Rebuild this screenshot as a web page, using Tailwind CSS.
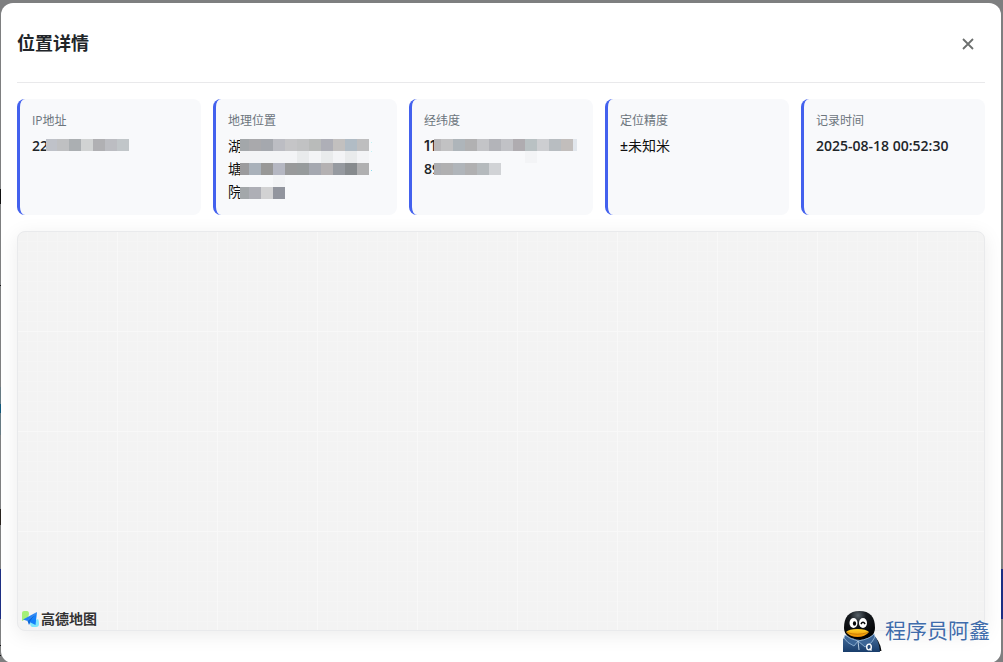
<!DOCTYPE html>
<html lang="zh-CN">
<head>
<meta charset="utf-8">
<meta name="viewport" content="width=device-width, initial-scale=1">
<title>位置详情</title>
<script src="https://cdn.jsdelivr.net/npm/@tailwindcss/browser@4"></script>
</head>
<body class="relative h-screen overflow-hidden bg-[#7e7f80] pt-[3px] pr-[2px] pl-px font-['Open_Sans','Noto_Sans_CJK_SC',sans-serif] text-[#212529]">

<!-- Edges of the dimmed page behind the dialog -->
<svg class="absolute top-0 left-0 h-[662px] w-px" viewBox="0 0 1 662" preserveAspectRatio="none" shape-rendering="crispEdges" aria-hidden="true">
  <path fill="#111" d="M0 189h1v15H0zM0 285h1v1H0zM0 645h1v1H0zM0 655h1v1H0z"/>
  <path fill="#667a83" d="M0 387h1v48H0z"/>
  <path fill="#10587c" d="M0 404h1v9H0z"/>
  <path fill="#29231e" d="M0 509h1v16H0z"/>
  <path fill="#1d2e83" d="M0 569h1v50H0z"/>
</svg>
<div class="absolute top-[569px] right-0 h-[50px] w-[2px] bg-[#1d2e83]"></div>

<main role="dialog" aria-labelledby="title" class="relative rounded-xl bg-white px-4 pt-4 pb-8">
  <header class="mb-4 flex items-center justify-between border-b border-[#e9e9eb] pb-[15px]">
    <h1 id="title" class="text-lg leading-[48px] font-bold">位置详情</h1>
    <button type="button" aria-label="关闭" class="flex size-[34px] items-center justify-center text-[#6c6f6e]">
      <svg class="mt-[2px] size-3" viewBox="0 0 12 12" fill="none" stroke="currentColor" stroke-width="1.8"><path d="M1 1l10 10M11 1L1 11"/></svg>
    </button>
  </header>

  <section class="mb-4 grid grid-cols-5 gap-3">
    <div class="relative min-h-[116px] rounded-lg border-l-3 border-[#4361ee] bg-[#f8f9fb] p-3">
      <div class="mb-1 text-xs leading-[19px] text-[#6c757d]">IP地址</div>
      <div class="text-sm leading-[23px] font-semibold">22</div>
      <svg class="absolute top-10 left-[26px] h-3 w-[83px]" viewBox="0 0 83 12" shape-rendering="crispEdges" aria-hidden="true">
        <path fill="#bfc2c9" d="M0 0h11v12H0z"/><path fill="#bfc0c2" d="M11 0h12v12H11z"/><path fill="#abafb2" d="M23 0h12v12H23z"/><path fill="#d1d3d3" d="M35 0h12v12H35z"/><path fill="#b0b0b3" d="M47 0h12v12H47z"/><path fill="#bcbdc2" d="M59 0h12v12H59z"/><path fill="#c1c6c9" d="M71 0h12v12H71z"/>
      </svg>
    </div>

    <div class="relative min-h-[116px] rounded-lg border-l-3 border-[#4361ee] bg-[#f8f9fb] p-3">
      <div class="mb-1 text-xs leading-[19px] text-[#6c757d]">地理位置</div>
      <div class="text-sm leading-[23px] font-normal text-[#111]">湖<br>塘<br>院</div>
      <svg class="absolute top-10 left-6 h-[60px] w-[132px]" viewBox="0 0 132 60" shape-rendering="crispEdges" aria-hidden="true">
        <path fill="#f8f9fb" d="M0 0h18v60H0z"/>
        <path fill="#f3f4f6" d="M0 12h129v12H0zM33 36h12v12H33z"/>
        <path fill="#e9ebec" d="M57 12h12v12H57zM81 12h12v12H81zM105 12h12v12H105z"/>
        <path fill="#a3a7aa" d="M0 0h9v12H0z"/><path fill="#a9a9ac" d="M9 0h12v12H9z"/><path fill="#a5a8ae" d="M21 0h12v12H21z"/><path fill="#bcbdc3" d="M33 0h12v12H33z"/><path fill="#c5c5c7" d="M45 0h12v12H45z"/><path fill="#c1c2c3" d="M57 0h12v12H57z"/><path fill="#b9bbba" d="M69 0h12v12H69z"/><path fill="#aeafb7" d="M81 0h12v12H81z"/><path fill="#c2c0bf" d="M93 0h12v12H93z"/><path fill="#b1bcc5" d="M105 0h12v12H105z"/><path fill="#bebebf" d="M117 0h12v12H117z"/>
        <path fill="#9b9b9d" d="M0 24h9v12H0z"/><path fill="#a9b1ba" d="M9 24h12v12H9z"/><path fill="#989897" d="M21 24h12v12H21z"/><path fill="#b5b7c2" d="M33 24h12v12H33z"/><path fill="#999a9b" d="M45 24h12v12H45z"/><path fill="#979b9c" d="M57 24h12v12H57z"/><path fill="#a5a8b0" d="M69 24h12v12H69z"/><path fill="#b4b1b2" d="M81 24h12v12H81z"/><path fill="#969aa0" d="M93 24h12v12H93z"/><path fill="#878b8e" d="M105 24h12v12H105z"/><path fill="#b0b0b1" d="M117 24h12v12H117z"/>
        <path fill="#a3a7aa" d="M0 48h9v12H0z"/><path fill="#aeafb6" d="M9 48h12v12H9z"/><path fill="#d2d2d3" d="M21 48h12v12H21z"/><path fill="#92959e" d="M33 48h12v12H33z"/>
        <path fill="#c2f5f5" d="M131 3h1v1h-1zM131 12h1v1h-1z"/><path fill="#8cdcf0" d="M131 31h1v1h-1z"/>
      </svg>
    </div>

    <div class="relative min-h-[116px] rounded-lg border-l-3 border-[#4361ee] bg-[#f8f9fb] p-3">
      <div class="mb-1 text-xs leading-[19px] text-[#6c757d]">经纬度</div>
      <div class="text-sm leading-[23px] font-semibold"><span class="font-[Inter,sans-serif]">11</span><br>89</div>
      <svg class="absolute top-10 left-[22px] h-9 w-[143px]" viewBox="0 0 143 36" shape-rendering="crispEdges" aria-hidden="true">
        <path fill="#f8f9fb" d="M0 0h12v36H0z"/>
        <path fill="#f3f4f6" d="M91 12h12v12H91z"/>
        <path fill="#b8b7b9" d="M0 0h7v12H0z"/><path fill="#c2c2c3" d="M7 0h12v12H7z"/><path fill="#aeb5ba" d="M19 0h12v12H19z"/><path fill="#b1b1b2" d="M31 0h12v12H31z"/><path fill="#c3c4c7" d="M43 0h12v12H43z"/><path fill="#b3b4b9" d="M55 0h12v12H55z"/><path fill="#c1c2c6" d="M67 0h12v12H67z"/><path fill="#afacb0" d="M79 0h12v12H79z"/><path fill="#b9c1c3" d="M91 0h12v12H91z"/><path fill="#cdced1" d="M103 0h12v12h-12z"/><path fill="#b8bdc1" d="M115 0h12v12h-12z"/><path fill="#c2bebc" d="M127 0h12v12h-12z"/><path fill="#e1e6ec" d="M139 0h4v12h-4z"/>
        <path fill="#acaeb2" d="M0 24h7v12H0z"/><path fill="#b0b0b1" d="M7 24h12v12H7z"/><path fill="#b0b5ba" d="M19 24h12v12H19z"/><path fill="#b0b0b1" d="M31 24h12v12H31z"/><path fill="#b5babd" d="M43 24h12v12H43z"/><path fill="#d1d3d6" d="M55 24h12v12H55z"/>
      </svg>
    </div>

    <div class="min-h-[116px] rounded-lg border-l-3 border-[#4361ee] bg-[#f8f9fb] p-3">
      <div class="mb-1 text-xs leading-[19px] text-[#6c757d]">定位精度</div>
      <div class="text-sm leading-[23px] font-normal text-[#111]"><span class="font-semibold">±</span>未知米</div>
    </div>

    <div class="min-h-[116px] rounded-lg border-l-3 border-[#4361ee] bg-[#f8f9fb] p-3">
      <div class="mb-1 text-xs leading-[19px] text-[#6c757d]">记录时间</div>
      <div class="text-sm leading-[23px] font-semibold">2025-08-18 00:52:30</div>
    </div>
  </section>

  <section aria-label="地图" class="flex h-[400px] items-end overflow-hidden rounded-lg border border-[#e9eaec] bg-[#f3f3f3] bg-[linear-gradient(to_right,transparent_99px,#f8f8f8_99px),linear-gradient(to_bottom,transparent_99px,#f8f8f8_99px),linear-gradient(to_right,transparent_9px,#f5f5f5_9px),linear-gradient(to_bottom,transparent_9px,#f5f5f5_9px)] bg-[size:100px_100px,100px_100px,10px_10px,10px_10px] pb-px pl-1 shadow-[0_4px_20px_rgba(0,0,0,0.08)]">
    <a href="#" class="flex items-center gap-px text-[#333]">
      <svg class="size-[18px]" viewBox="0 0 18 18" aria-hidden="true">
        <path fill="#a5f078" d="M0 3Q0 1 2 1H5Q7 1 7 4L6 8 0 11z"/>
        <path fill="#7ee7fb" d="M8 13L16 9Q17 10 17 14Q17 17 14 17H10Q8 16 8 13z"/>
        <path fill="#2482f5" d="M15 2L1 9.500 5.500 11z"/>
        <path fill="#0867dc" d="M15 2L5.500 11 7 15 8.500 12z"/>
        <path fill="#1280fa" d="M15 2L7.500 12 13.500 15z"/>
      </svg>
      <span class="text-sm leading-5 font-bold [text-shadow:0_0_2px_white]">高德地图</span>
    </a>
  </section>
</main>

<!-- Author watermark -->
<div class="absolute right-[13px] bottom-[10px] flex items-center gap-[3px] text-[#3f6cab]">
  <svg class="h-[41px] w-[39px]" viewBox="0 0 39 41" aria-hidden="true">
    <defs>
      <radialGradient id="head" cx=".45" cy=".15" r=".75"><stop offset="0" stop-color="#59636b"/><stop offset=".35" stop-color="#171b20"/><stop offset="1" stop-color="#020304"/></radialGradient>
      <linearGradient id="shirt" x1="0" y1="0" x2="0" y2="1"><stop offset="0" stop-color="#476f9e"/><stop offset="1" stop-color="#183d6b"/></linearGradient>
      <linearGradient id="beak" x1="0" y1="0" x2="0" y2="1"><stop offset="0" stop-color="#ffd52b"/><stop offset="1" stop-color="#ee8c00"/></linearGradient>
    </defs>
    <path fill="#090b0e" d="M29 23Q37 29 38.500 40H31z"/>
    <path fill="url(#shirt)" d="M0 28L4 24Q15 33 30 24Q36 28 37 41H0z"/>
    <path fill="url(#head)" d="M1 17Q1 0 16.500 0Q32 0 32 17Q32 27 17 29Q1 27 1 17z"/>
    <path fill="#3b6596" stroke="#9cbddb" stroke-width=".8" d="M2 24Q7 28 15 30L11 35Q4 32 1 27zM31 23Q27 28 15 30L22 36Q30 32 32 26z"/>
    <path fill="none" stroke="#c9dced" stroke-width=".9" d="M15 30L16 39"/>
    <ellipse cx="10.500" cy="12" rx="4" ry="5" fill="#fff"/>
    <ellipse cx="20" cy="12" rx="4" ry="5" fill="#fff"/>
    <ellipse cx="11.500" cy="12.500" rx="1.600" ry="2.300" fill="#050607"/>
    <path fill="none" stroke="#050607" stroke-width="1.600" d="M18 13Q20 9.500 22 13"/>
    <path fill="url(#beak)" d="M3 21Q6 18 14.500 18Q23 18 26 21Q22 26 14.500 26Q7 26 3 21z"/>
    <path fill="none" stroke="#b66a00" stroke-width=".7" d="M4 21.500Q14 25 25 21.500"/>
    <ellipse cx="26" cy="36" rx="2.300" ry="2.900" fill="none" stroke="#fff" stroke-width="1.400"/>
    <path stroke="#fff" stroke-width="1.300" d="M26.500 37.500l2 2"/>
  </svg>
  <span class="self-start text-[21px] leading-[38px] [text-shadow:0_0_2px_white]">程序员阿鑫</span>
</div>
</body>
</html>
